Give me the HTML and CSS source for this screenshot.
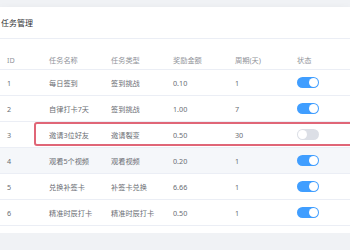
FILE: index.html
```html
<!DOCTYPE html>
<html lang="zh">

<head>
    <meta charset="UTF-8">
    <meta name="viewport" content="width=device-width, initial-scale=1.0">
    <title>任务管理</title>
    <link rel="stylesheet" href="styles.css">
</head>

<body>
    <div class="card">
        <div class="card-header">任务管理</div>

        <div class="card-body">
            <table class="task-table">
                <colgroup>
                    <col class="col-id">
                    <col class="col-wide">
                    <col class="col-wide">
                    <col class="col-wide">
                    <col class="col-wide">
                    <col class="col-last">
                </colgroup>
                <thead>
                    <tr>
                        <th>ID</th>
                        <th>任务名称</th>
                        <th>任务类型</th>
                        <th>奖励金额</th>
                        <th>周期(天)</th>
                        <th>状态</th>
                    </tr>
                </thead>
                <tbody>
                    <tr>
                        <td>1</td>
                        <td>每日签到</td>
                        <td>签到挑战</td>
                        <td>0.10</td>
                        <td>1</td>
                        <td><span class="switch on"></span></td>
                    </tr>
                    <tr>
                        <td>2</td>
                        <td>自律打卡7天</td>
                        <td>签到挑战</td>
                        <td>1.00</td>
                        <td>7</td>
                        <td><span class="switch on"></span></td>
                    </tr>
                    <tr>
                        <td>3</td>
                        <td>邀请3位好友</td>
                        <td>邀请裂变</td>
                        <td>0.50</td>
                        <td>30</td>
                        <td><span class="switch"></span></td>
                    </tr>
                    <tr class="hover">
                        <td>4</td>
                        <td>观看5个视频</td>
                        <td>观看视频</td>
                        <td>0.20</td>
                        <td>1</td>
                        <td><span class="switch on"></span></td>
                    </tr>
                    <tr>
                        <td>5</td>
                        <td>兑换补签卡</td>
                        <td>补签卡兑换</td>
                        <td>6.66</td>
                        <td>1</td>
                        <td><span class="switch on"></span></td>
                    </tr>
                    <tr>
                        <td>6</td>
                        <td>精准时辰打卡</td>
                        <td>精准时辰打卡</td>
                        <td>0.50</td>
                        <td>1</td>
                        <td><span class="switch on"></span></td>
                    </tr>
                </tbody>
            </table>
        </div>

        <!-- highlighted row marker -->
        <div class="highlight"></div>
    </div>
</body>

</html>
```

FILE: styles.css
```css
body {
    margin: 0;
    padding-top: 7px;
    background-color: #f0f2f5;
    font-family: "Noto Sans", "Noto Sans CJK SC", sans-serif;
}

.card {
    position: relative;
    overflow: hidden;
    background-color: #fff;
    box-shadow: 0 2px 8px rgba(0, 0, 0, 0.06);
    padding-bottom: 7px;
}

.card-header {
    height: 31px;
    line-height: 31px;
    padding-left: 1px;
    font-size: 8px;
    color: #303133;
    border-bottom: 1px solid #ebeef5;
}

.card-body {
    padding-top: 11px;
}

.task-table {
    width: 350px;
    border-collapse: collapse;
    table-layout: fixed;
    font-size: 7.2px;
}

.col-id {
    width: 42px;
}

.col-wide {
    width: 62px;
}

.col-last {
    width: 60px;
}

.task-table th {
    height: 19px;
    padding: 0 0 0 7px;
    text-align: left;
    font-weight: normal;
    color: #909399;
    border-bottom: 1px solid #ebeef5;
}

.task-table td {
    height: 25px;
    padding: 0 0 0 7px;
    color: #6a6d73;
    border-bottom: 1px solid #ebeef5;
    white-space: nowrap;
}

.task-table tr.hover td {
    background-color: #f5f7fa;
}

.switch {
    position: relative;
    display: block;
    width: 22px;
    height: 11px;
    border-radius: 6px;
    background-color: #dcdfe6;
}

.switch::after {
    content: "";
    position: absolute;
    top: 1px;
    left: 1px;
    width: 9px;
    height: 9px;
    border-radius: 50%;
    background-color: #fff;
}

.switch.on {
    background-color: #409eff;
}

.switch.on::after {
    left: 12px;
}

.highlight {
    position: absolute;
    left: 34px;
    top: 115px;
    width: 330px;
    height: 20px;
    border: 2px solid #e06677;
    border-radius: 3px;
}
```
